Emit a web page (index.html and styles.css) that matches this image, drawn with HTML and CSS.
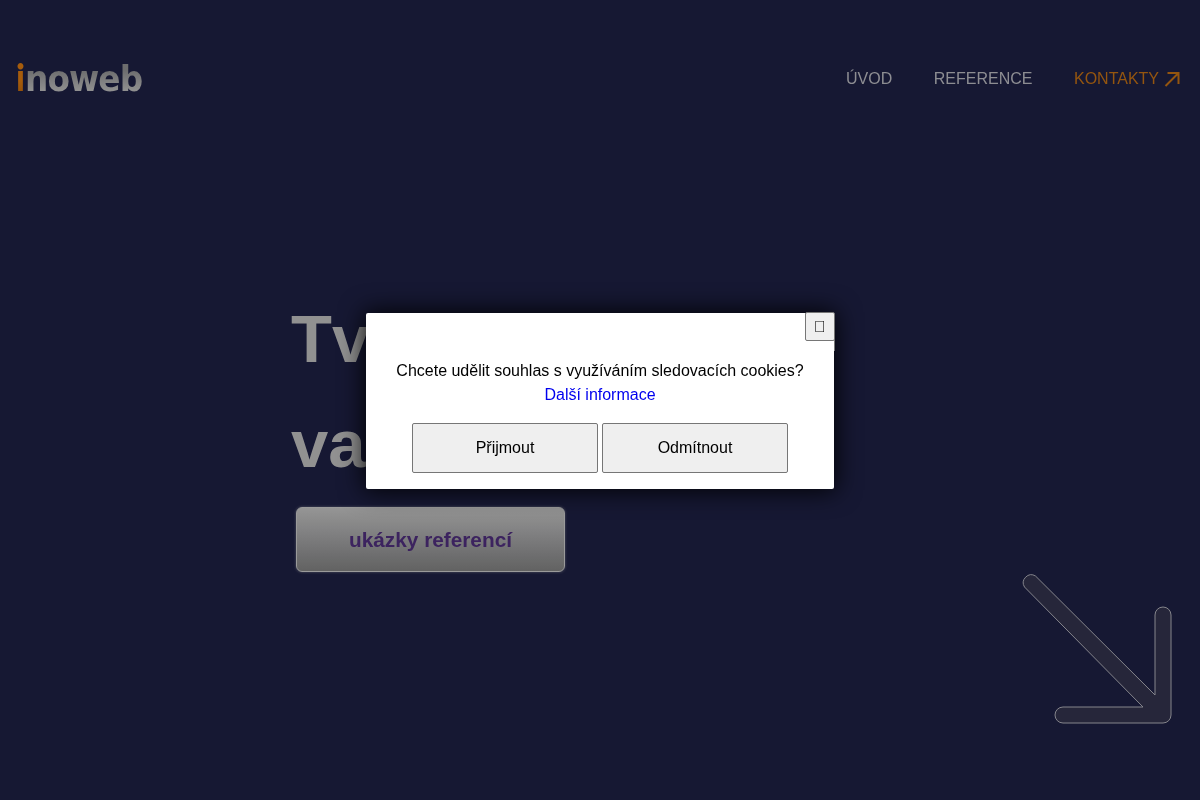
FILE: index.html
```html
<!DOCTYPE html>
<html lang="cs">
<head>
  <meta charset="UTF-8" />
  <meta name="viewport" content="width=device-width, initial-scale=1" />
  <title>inoweb</title>
  <link rel="stylesheet" href="styles.css">
</head>
<body>
  <header class="top-bar">
    <a class="logo" href="#"><span class="logo-i">i</span><span class="logo-rest">noweb</span></a>
    <nav class="menu">
      <a href="#">ÚVOD</a>
      <a href="#">REFERENCE</a>
      <a class="menu-contact" href="#">KONTAKTY
        <svg class="menu-arrow" width="16" height="16" viewBox="0 0 16 16" fill="none" stroke="currentColor" stroke-width="2">
          <path d="M1.500 15 L14 2.500 M3.500 2 H14.500 V13" />
        </svg>
      </a>
    </nav>
  </header>

  <main class="hero">
    <h1>Tvorba webu<br>vaší firmy</h1>
    <a class="hero-btn" href="#">ukázky referencí</a>
  </main>

  <svg class="big-arrow" width="150" height="150" viewBox="0 0 150 150">
    <path d="M2.500 13 A8 8 0 0 1 13.500 2 L133 121 V41 A8 8 0 0 1 149 41 V141 A8 8 0 0 1 141 149 H41 A8 8 0 0 1 41 133 H121 Z" fill="#26263a" stroke="#85858c" stroke-width="1" />
  </svg>

  <div class="cookie-box">
    <button class="cookie-close">&#xe5cd;</button>
    <p class="cookie-text">Chcete udělit souhlas s využíváním sledovacích cookies?<br><a href="#">Další informace</a></p>
    <div class="cookie-actions">
      <button class="cookie-btn">Přijmout</button>
      <button class="cookie-btn">Odmítnout</button>
    </div>
  </div>
</body>
</html>
```

FILE: styles.css
```css
html, body {
  height: 100%;
}
body {
  font-family: "Liberation Sans", Arial, sans-serif;
  background: #161833;
  margin: 0;
  overflow: hidden;
}
.top-bar {
  display: flex;
  justify-content: space-between;
  align-items: center;
  height: 46px;
  padding: 56px 20px 0 16px;
  opacity: 0.99;
}
.logo {
  display: inline-block;
  align-self: flex-start;
  margin-top: -3px;
  font-family: "DejaVu Sans", sans-serif;
  font-size: 36px;
  font-weight: 700;
  line-height: 46px;
  letter-spacing: -1px;
  text-decoration: none;
  transform: scaleX(0.91);
  transform-origin: left;
}
.logo-i,
.logo-rest {
  background-clip: text;
  -webkit-background-clip: text;
  color: transparent;
}
.logo-i {
  font-family: Lato, sans-serif;
  font-weight: 900;
  font-size: 38px;
  letter-spacing: 0;
  background-image: linear-gradient(#a85d0c 60%, #8c4c08);
}
.logo-rest {
  background-image: linear-gradient(#6f6f6f 30%, #929292 80%);
}
.menu {
  display: flex;
  gap: 41.5px;
  font-size: 16px;
}
.menu a {
  color: #8f8f94;
  text-decoration: none;
}
.menu a.menu-contact {
  color: #96560f;
  display: flex;
  align-items: center;
  gap: 5px;
}
.hero {
  padding: 184px 0 0 291px;
  opacity: 0.99;
}
.hero h1 {
  margin: 0 0 11px;
  font-size: 67px;
  line-height: 105px;
  font-weight: 700;
  color: #939393;
  white-space: nowrap;
}
.hero-btn {
  display: block;
  box-sizing: border-box;
  width: 269px;
  height: 65px;
  margin-left: 5px;
  line-height: 63px;
  text-align: center;
  font-size: 20.8px;
  font-weight: 700;
  color: #3d2460;
  text-decoration: none;
  background: linear-gradient(#979797, #636363);
  border: 1px solid #9c9c9c;
  border-radius: 6px;
  box-shadow: 0 0 3px rgba(150, 150, 150, 0.5);
}
.big-arrow {
  position: absolute;
  left: 1022px;
  top: 574px;
}
.cookie-box {
  position: absolute;
  left: 366px;
  top: 313px;
  width: 468px;
  height: 176px;
  box-sizing: border-box;
  padding-top: 46px;
  background: white;
  border-radius: 2px;
  box-shadow: 0 0 24px 2px rgba(0, 0, 0, 0.9);
  text-align: center;
  will-change: transform;
}
.cookie-close {
  position: absolute;
  top: -1px;
  right: -1px;
  width: 30px;
  height: 29px;
  padding: 0;
  background: #efefef;
  border: 1px solid #767676;
  border-radius: 2px;
  font-family: "Liberation Sans", Arial, sans-serif;
  font-size: 16px;
  color: black;
}
.cookie-close::after {
  content: "";
  position: absolute;
  top: 100%;
  right: -1px;
  width: 1px;
  height: 11px;
  background: #777;
}
.cookie-text {
  margin: 0 0 16px;
  font-size: 16px;
  line-height: 24px;
  color: black;
}
.cookie-text a {
  color: #0000ee;
  text-decoration: none;
}
.cookie-actions {
  display: flex;
  justify-content: center;
  gap: 4px;
}
.cookie-btn {
  width: 186px;
  height: 50px;
  padding: 0;
  background: #efefef;
  border: 1px solid #767676;
  border-radius: 2px;
  font-family: "Liberation Sans", Arial, sans-serif;
  font-size: 16px;
  color: black;
}
```
